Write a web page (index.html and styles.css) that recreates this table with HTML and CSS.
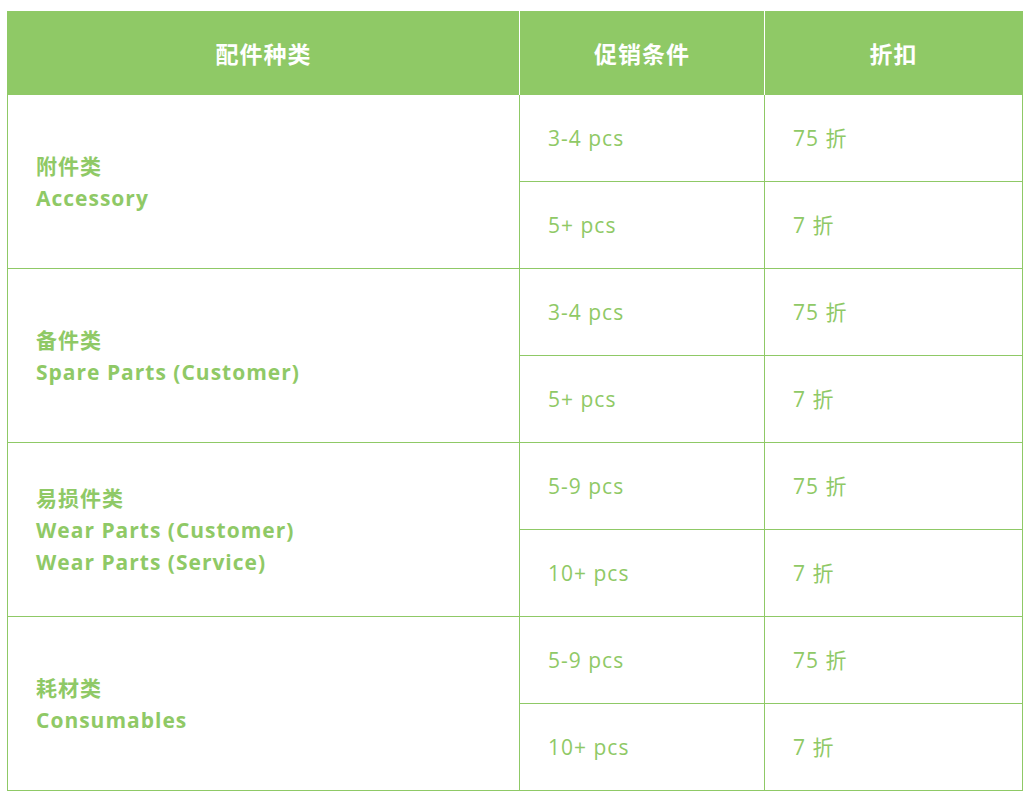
FILE: index.html
```html
<!DOCTYPE html>
<html lang="zh">
<head>
<meta charset="utf-8">
<link rel="stylesheet" href="styles.css">
</head>
<body>
<table class="promo">
  <colgroup>
    <col class="c1"><col class="c2"><col class="c3">
  </colgroup>
  <thead>
    <tr><th>配件种类</th><th>促销条件</th><th>折扣</th></tr>
  </thead>
  <tbody>
    <tr><td class="cat" rowspan="2">附件类<br>Accessory</td><td>3-4 pcs</td><td>75 折</td></tr>
    <tr><td>5+ pcs</td><td>7 折</td></tr>
    <tr><td class="cat" rowspan="2">备件类<br>Spare Parts (Customer)</td><td>3-4 pcs</td><td>75 折</td></tr>
    <tr><td>5+ pcs</td><td>7 折</td></tr>
    <tr><td class="cat" rowspan="2">易损件类<br>Wear Parts (Customer)<br>Wear Parts (Service)</td><td>5-9 pcs</td><td>75 折</td></tr>
    <tr><td>10+ pcs</td><td>7 折</td></tr>
    <tr><td class="cat" rowspan="2">耗材类<br>Consumables</td><td>5-9 pcs</td><td>75 折</td></tr>
    <tr><td>10+ pcs</td><td>7 折</td></tr>
  </tbody>
</table>
</body>
</html>
```
FILE: styles.css
```css
html, body {
  margin: 0;
  padding: 0;
  background: #ffffff;
}
body {
  padding: 11px 0 0 7px;
  font-family: "Open Sans", "Noto Sans CJK SC", sans-serif;
  color: #8fc966;
}
.promo {
  border-collapse: collapse;
  table-layout: fixed;
  width: 1015px;
}
.c1 { width: 512px; }
.c2 { width: 245px; }
.c3 { width: 258px; }
.promo th {
  background: #8fc966;
  color: #ffffff;
  font-size: 23px;
  font-weight: 700;
  letter-spacing: 1px;
  height: 83px;
  padding: 0;
  border-left: 1px solid #ffffff;
  text-align: center;
  vertical-align: middle;
}
.promo th:first-child { border-left: 1px solid #8fc966; }
.promo th:last-child { border-right: 1px solid #8fc966; }
.promo td {
  border: 1px solid #8fc966;
  height: 86px;
  padding: 0 0 0 28px;
  font-size: 21px;
  line-height: 32px;
  vertical-align: middle;
  letter-spacing: 1px;
}
.promo td.cat {
  font-weight: 700;
  padding-left: 28px;
}
```
